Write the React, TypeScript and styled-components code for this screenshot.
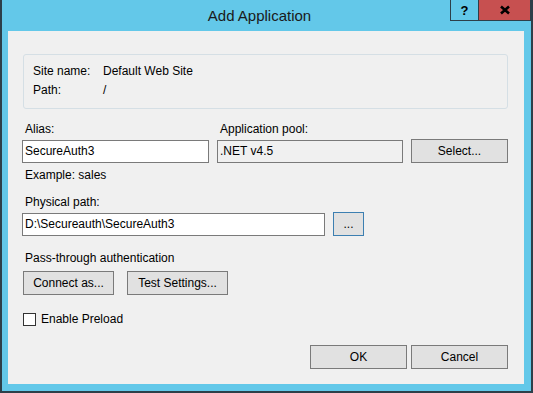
import React from 'react';
import styled, { createGlobalStyle } from 'styled-components';

const Global = createGlobalStyle`
  html, body { margin: 0; padding: 0; background: #ffffff; }
  body { font-family: "Liberation Sans", Arial, sans-serif; font-size: 12px; color: #000; }
  * { box-sizing: border-box; }
`;

const Window = styled.div`
  width: 533px;
  height: 393px;
  background: #63c8e9;
  border-left: 2px solid #2d3f49;
  border-right: 2px solid #2d3f49;
  border-bottom: 2px solid #2d3f49;
  padding: 0 7px 7px 6px;
  display: flex;
  flex-direction: column;
`;

const TitleBar = styled.div`
  height: 31px;
  display: flex;
  margin-right: -7px;
  flex-shrink: 0;
`;

const Title = styled.div`
  flex: 1;
  padding-left: 61px;
  text-align: center;
  font-size: 15px;
  line-height: 31px;
  color: #1a1a1a;
`;

const CaptionButtons = styled.div`
  display: flex;
  height: 21px;
`;

const CaptionButton = styled.div<{ $close?: boolean }>`
  width: ${(p) => (p.$close ? '52px' : '29px')};
  height: 21px;
  border: 1px solid #2d3f49;
  border-left: ${(p) => (p.$close ? 'none' : '1px solid #2d3f49')};
  border-top: none;
  background: ${(p) => (p.$close ? '#c75050' : '#63c8e9')};
  display: flex;
  align-items: center;
  justify-content: center;
  font-weight: bold;
  font-size: 13px;
  color: #000;
`;

const Client = styled.div`
  flex: 1;
  background: #f0f0f0;
  padding: 23px 16px 15px 14px;
  display: flex;
  flex-direction: column;
`;

const InfoBox = styled.div`
  margin-left: 1px;
  border: 1px solid #d5dfe5;
  border-radius: 3px;
  padding: 7px 9px 8px 9px;
  display: grid;
  grid-template-columns: 70px 1fr;
  line-height: 19px;
`;

const FieldGrid = styled.div`
  margin-top: 12px;
  display: grid;
  grid-template-columns: 187px 186px 97px;
  column-gap: 8px;
  align-items: end;
`;

const Label = styled.div<{ $below?: number }>`
  line-height: 16px;
  padding-left: 3px;
  margin-bottom: ${(p) => p.$below ?? 2}px;
  white-space: nowrap;
`;

const TextBox = styled.div<{ $readOnly?: boolean; $width?: number }>`
  height: 23px;
  ${(p) => (p.$width ? `width: ${p.$width}px;` : '')}
  border: 1px solid #7a7a7a;
  background: ${(p) => (p.$readOnly ? '#f0f0f0' : '#ffffff')};
  padding-left: 2px;
  line-height: 21px;
  white-space: nowrap;
`;

const Button = styled.div<{ $width: number; $focused?: boolean }>`
  width: ${(p) => p.$width}px;
  height: 24px;
  border: 1px solid ${(p) => (p.$focused ? '#3c7fb1' : '#7a7a7a')};
  background: #e1e1e1;
  display: flex;
  align-items: center;
  justify-content: center;
  line-height: 16px;
  white-space: nowrap;
`;

const Hint = styled.div`
  grid-column: 1;
  margin-top: 4px;
  line-height: 16px;
  padding-left: 3px;
`;

const Section = styled.div<{ $top: number }>`
  margin-top: ${(p) => p.$top}px;
  display: flex;
  flex-direction: column;
`;

const Row = styled.div<{ $gap: number; $indent?: number }>`
  display: flex;
  align-items: flex-end;
  gap: ${(p) => p.$gap}px;
  padding-left: ${(p) => p.$indent ?? 0}px;
`;

const CheckRow = styled.label`
  margin-top: 16px;
  margin-left: 1px;
  height: 16px;
  display: flex;
  align-items: center;
  gap: 5px;
  line-height: 16px;
`;

const CheckBox = styled.span`
  width: 13px;
  height: 13px;
  border: 1px solid #333333;
  background: #ffffff;
  display: inline-block;
`;

const Footer = styled.div`
  margin-top: auto;
  display: flex;
  justify-content: flex-end;
  gap: 4px;
`;

const CloseIcon = () => (
  <svg width="12" height="10" viewBox="0 0 12 10">
    <path d="M2 1.5 L10 8.5 M10 1.5 L2 8.5" stroke="#000" strokeWidth="2.6" strokeLinecap="butt" />
  </svg>
);

export default function App() {
  return (
    <>
      <Global />
      <Window>
        <TitleBar>
          <Title>Add Application</Title>
          <CaptionButtons>
            <CaptionButton>?</CaptionButton>
            <CaptionButton $close>
              <CloseIcon />
            </CaptionButton>
          </CaptionButtons>
        </TitleBar>
        <Client>
          <InfoBox>
            <span>Site name:</span>
            <span>Default Web Site</span>
            <span>Path:</span>
            <span>/</span>
          </InfoBox>
          <FieldGrid>
            <Label>Alias:</Label>
            <Label>Application pool:</Label>
            <span />
            <TextBox>SecureAuth3</TextBox>
            <TextBox $readOnly>.NET v4.5</TextBox>
            <Button $width={97}>Select...</Button>
            <Hint>Example: sales</Hint>
          </FieldGrid>
          <Section $top={11}>
            <Label>Physical path:</Label>
            <Row $gap={8}>
              <TextBox $width={303}>D:\Secureauth\SecureAuth3</TextBox>
              <Button $width={31} $focused>...</Button>
            </Row>
          </Section>
          <Section $top={14}>
            <Label $below={5}>Pass-through authentication</Label>
            <Row $gap={13} $indent={1}>
              <Button $width={91}>Connect as...</Button>
              <Button $width={101}>Test Settings...</Button>
            </Row>
          </Section>
          <CheckRow>
            <CheckBox />
            Enable Preload
          </CheckRow>
          <Footer>
            <Button $width={97}>OK</Button>
            <Button $width={97}>Cancel</Button>
          </Footer>
        </Client>
      </Window>
    </>
  );
}
